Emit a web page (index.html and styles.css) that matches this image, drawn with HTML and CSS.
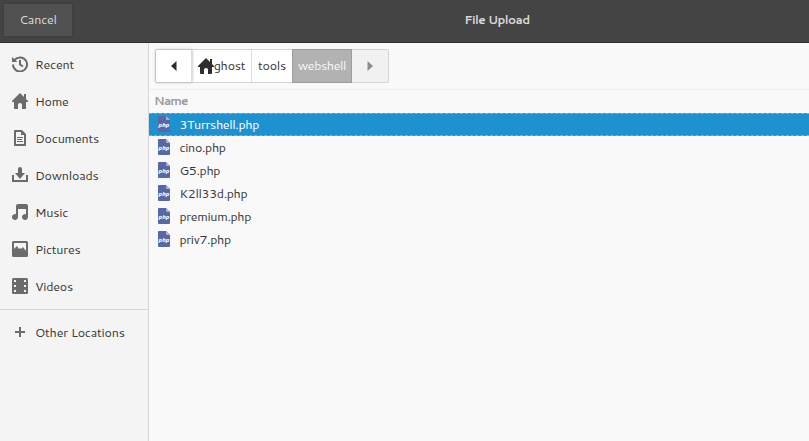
FILE: index.html
```html
<!DOCTYPE html>
<html lang="en">
<head>
<meta charset="utf-8">
<title>File Upload</title>
<link rel="stylesheet" href="styles.css">
</head>
<body>
<svg class="defs" width="0" height="0">
  <symbol id="home" viewBox="0 0 16 16"><path d="M8 0 0 8v1h2v6.200q0 .8.8.8H6v-4.500q0-1.500 2-1.500t2 1.500V16h3.200q.8 0 .8-.8V9h2V8l-2-2V1h-2v3z"/></symbol>
  <symbol id="php" viewBox="0 0 12 16"><path fill="#5768a5" d="M1 0h7l4 4v11q0 1-1 1H1q-1 0-1-1V1q0-1 1-1z"/><path fill="#a9b3d5" d="M8 0l4 4H9q-1 0-1-1z"/><text x="6" y="10.800" text-anchor="middle" class="php-label">php</text></symbol>
</svg>
<header class="titlebar"><button class="cancel">Cancel</button><h1>File Upload</h1></header>
<div class="body">
  <nav class="sidebar">
    <a class="place"><svg viewBox="0 0 16 16"><path fill="none" stroke="currentColor" stroke-width="2" d="M2.600 4A7 7 0 1 1 1 8.500M8 4v4.500l3 2"/><path d="M0 1v5h5.500z"/></svg><span>Recent</span></a>
    <a class="place"><svg><use href="#home"/></svg><span>Home</span></a>
    <a class="place"><svg viewBox="0 0 16 16"><path fill="none" stroke="currentColor" stroke-width="2" stroke-linejoin="round" d="M3 1h6.500L13 4.500V15H3z"/><path d="M9 1v4h4zM5 7h6v1H5zM5 9h5v1H5zM5 11h6v1H5z"/></svg><span>Documents</span></a>
    <a class="place"><svg viewBox="0 0 16 16"><path d="M6 2q0-2 2-2t2 2v4h3l-5 6-5-6h3zM0 8h2v5h12V8h2v7H0z"/></svg><span>Downloads</span></a>
    <a class="place"><svg viewBox="0 0 16 16"><path d="M4 2q0-2 2-2h8q2 0 2 2v11a3 3 0 1 1-2-2.800V5H6v8a3 3 0 1 1-2-2.800z"/></svg><span>Music</span></a>
    <a class="place"><svg viewBox="0 0 16 16"><path fill-rule="evenodd" d="M1.500 0h13Q16 0 16 1.500v13q0 1.500-1.500 1.500h-13Q0 16 0 14.500v-13Q0 0 1.500 0zM2 2v6l1-1 2-2 2 3 1-1 1 1 2-2 3 4V2z"/></svg><span>Pictures</span></a>
    <a class="place"><svg viewBox="0 0 16 16"><path fill-rule="evenodd" d="M1.500 0h13Q16 0 16 1.500v13q0 1.500-1.500 1.500h-13Q0 16 0 14.500v-13Q0 0 1.500 0zM2 2v2h2V2zM2 7v2h2V7zM2 12v2h2v-2zM12 2v2h2V2zM12 7v2h2V7zM12 12v2h2v-2z"/></svg><span>Videos</span></a>
    <hr>
    <a class="place"><svg viewBox="0 0 16 16"><path d="M7 3h2v4h4v2H9v4H7V9H3V7h4z"/></svg><span>Other Locations</span></a>
  </nav>
  <main>
    <div class="toolbar"><div class="pathbar">
      <button class="back"><svg width="6" height="10"><path d="M5.500 0v10L0 5z"/></svg></button>
      <button class="ghost"><svg width="16" height="16"><use href="#home"/></svg><span>ghost</span></button>
      <button class="tools"><span>tools</span></button>
      <button class="current"><span>webshell</span></button>
      <button class="forward"><svg width="6" height="10"><path d="M.5 0v10L6 5z"/></svg></button>
    </div></div>
    <div class="column">Name</div>
    <ul class="files">
      <li class="selected"><svg><use href="#php"/></svg><span>3Turrshell.php</span></li>
      <li><svg><use href="#php"/></svg><span>cino.php</span></li>
      <li><svg><use href="#php"/></svg><span>G5.php</span></li>
      <li><svg><use href="#php"/></svg><span>K2ll33d.php</span></li>
      <li><svg><use href="#php"/></svg><span>premium.php</span></li>
      <li><svg><use href="#php"/></svg><span>priv7.php</span></li>
    </ul>
  </main>
</div>
</body>
</html>
```
FILE: styles.css
```css
* { box-sizing: border-box; }
body { margin: 0; height: 441px; overflow: hidden; display: flex; flex-direction: column; font: 12.5px/20px Cantarell, "Noto Sans", sans-serif; letter-spacing: -.22px; color: #393939; background: #f9f9f9; }
.defs { display: none; }
button { font: inherit; letter-spacing: inherit; color: inherit; margin: 0; padding: 0; border: 0; background: none; display: flex; align-items: center; justify-content: center; }
.titlebar { flex: none; height: 43px; display: grid; grid-template-columns: 185px 616px; padding: 4px 0 0 4px; background: #444; border-bottom: 1px solid #2e2e2e; }
.cancel { width: 68px; height: 32px; padding-bottom: 2px; background: #515151; color: #dadada; box-shadow: 0 0 2px #333; }
.titlebar h1 { margin: 0; font-size: 12px; line-height: 32px; letter-spacing: -.55px; color: #dadada; text-align: center; }
.body { flex: 1; display: flex; }
.sidebar { width: 149px; padding-top: 3px; background: #f4f4f4; border-right: 1px solid #d6d6d6; }
.place { display: flex; align-items: center; height: 37px; padding-left: 12px; gap: 7px; }
.place svg { width: 16px; height: 16px; margin-bottom: 1px; color: #6b6b6b; fill: #6b6b6b; }
.place span, .pathbar span, .files span { padding-bottom: 2px; }
.sidebar hr { height: 1px; border: 0; background: #d6d6d6; margin: 4px 0; }
main { flex: 1; }
.toolbar { height: 47px; padding: 6px 0 0 6px; border-bottom: 1px solid #ededed; }
.pathbar { display: flex; width: 234px; height: 34px; border: 1px solid #d4d4d4; border-radius: 2px; background: #fff; }
.pathbar button { border-right: 1px solid #ddd; }
.pathbar svg { fill: #2e2e2e; }
.pathbar .back { width: 36px; box-shadow: 0 0 3px #aaa; }
.pathbar .ghost { width: 60px; }
.pathbar .tools { width: 40px; border-right: 0; }
.pathbar .current { width: 60px; margin: -1px 0; background: #b2b2b2; border: 1px solid #9d9d9d; color: #f8f8f8; letter-spacing: -.4px; }
.pathbar .forward { flex: 1; background: #f1f1f1; border: 0; }
.pathbar .forward svg { fill: #8d8d8d; }
.column { height: 23px; padding-left: 5px; font-size: 12px; line-height: 22px; font-weight: 700; letter-spacing: -.8px; color: #999; }
.files { list-style: none; margin: 0; padding: 0; }
.files li { display: flex; align-items: center; height: 23px; padding-left: 9px; gap: 9.5px; border: 1px dashed transparent; border-left: 0; border-right: 0; letter-spacing: -.35px; }
.files svg { width: 12px; height: 16px; margin-bottom: 1px; }
.files .selected { background: #1e91d0; border-color: #68b7e2; color: #fff; }
.php-label { font: italic 700 6px "Noto Sans", sans-serif; letter-spacing: 0; fill: #fff; }
```
